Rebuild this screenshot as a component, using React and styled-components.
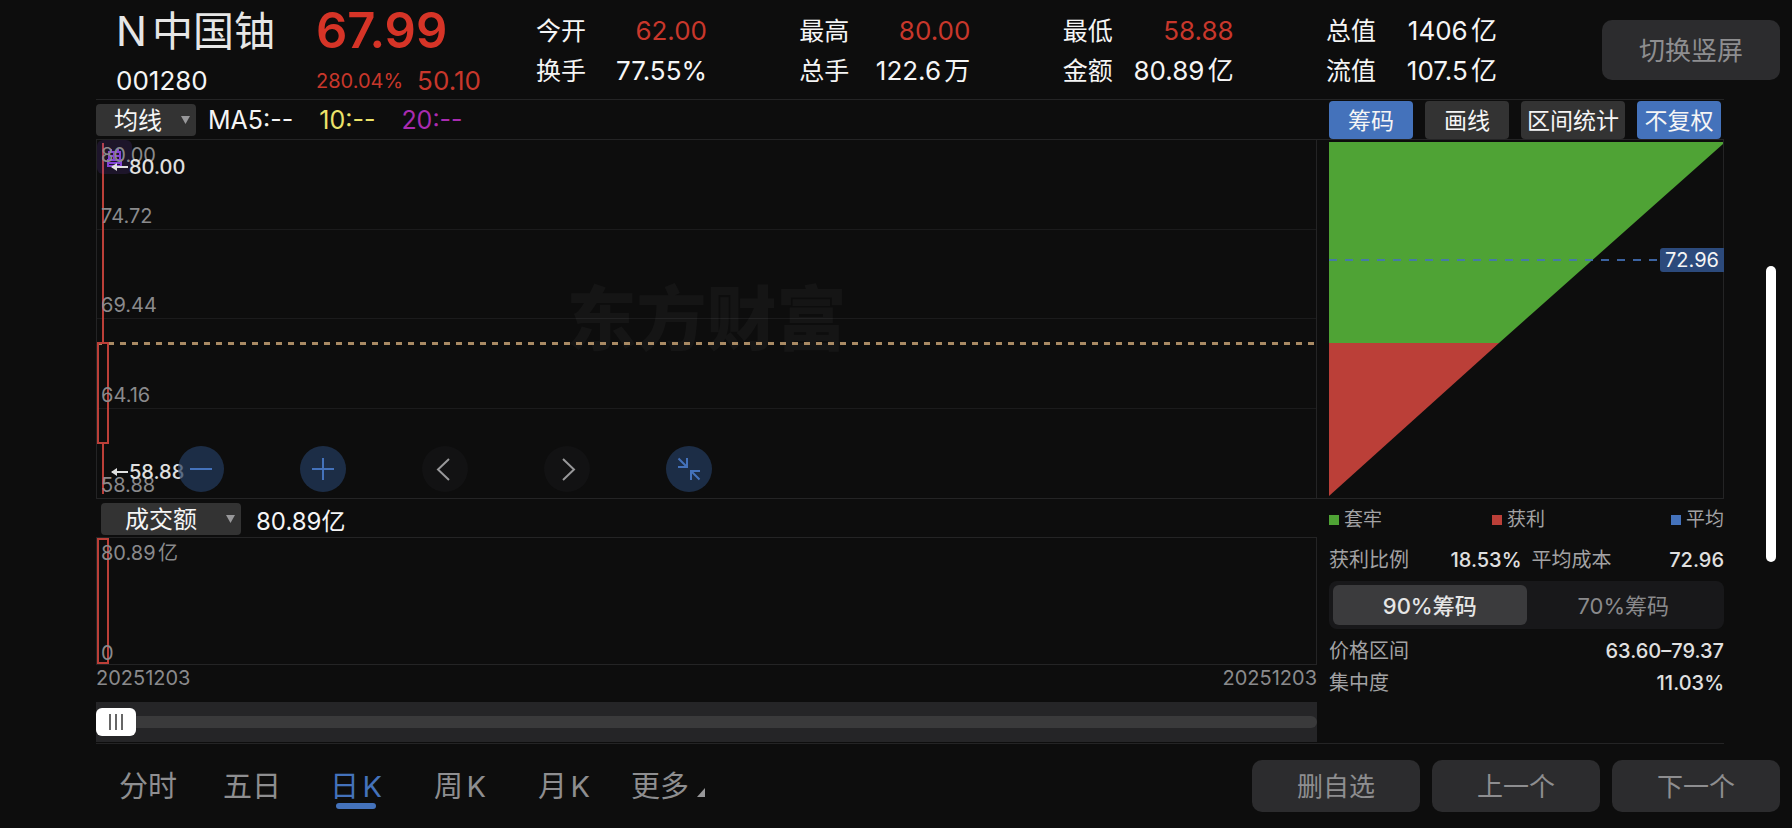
import React, { useState } from 'react';
import styled, { createGlobalStyle } from 'styled-components';

const GlobalStyle = createGlobalStyle`
  *, *::before, *::after {
    box-sizing: border-box;
  }

  body {
    margin: 0;
    background: #0d0d0d;
    color: #f5f5f5;
    font-family: Inter, "Noto Sans CJK SC", sans-serif;
  }

  button, select, input {
    font-family: inherit;
    margin: 0;
  }

  button {
    border: none;
    padding: 0;
    cursor: pointer;
  }
`;

const LINE = '#242425';
const RED = '#bb3f38';
const GREEN = '#4fa335';
const BLUE = '#4472bb';

const Page = styled.div`
  overflow: hidden;
`;

const Header = styled.header`
  display: flex;
  align-items: flex-start;
  height: 99px;
  padding: 0 12px 0 116px;
`;

const Quote = styled.div`
  display: grid;
  grid-template-columns: 200px 1fr;
  grid-template-rows: 62px 37px;
  align-items: center;
  flex: 0 0 420px;
`;

const Name = styled.h1`
  margin: 0;
  font-size: 41px;
  font-weight: 400;
  line-height: 60px;
  color: #e6e6e6;
  white-space: nowrap;
  text-autospace: normal;
`;

const Price = styled.strong`
  font-size: 49px;
  font-weight: 600;
  line-height: 60px;
  color: #d63427;
`;

const Code = styled.span`
  font-size: 26px;
  line-height: 38px;
`;

const Change = styled.div`
  display: flex;
  align-items: center;
  gap: 14px;
  font-size: 26px;
  line-height: 38px;
  color: #c8372b;

  small {
    font-size: 20px;
  }
`;

const Stats = styled.dl`
  display: flex;
  flex: 1;
  justify-content: space-between;
  margin: 0 105px 0 0;
  padding-top: 11px;
`;

const StatColumn = styled.div`
  width: 171px;
`;

const Stat = styled.div`
  display: flex;
  justify-content: space-between;
  line-height: 40px;
  white-space: nowrap;

  dt {
    font-size: 25px;
  }

  dd {
    margin: 0;
    font-size: 26px;
    color: ${ p => p.$up ? '#c8372b' : 'inherit' };
    text-autospace: normal;
  }
`;

const GreyButton = styled.button`
  flex: none;
  width: ${ p => p.$large ? 178 : 168 }px;
  height: ${ p => p.$large ? 60 : 52 }px;
  margin-top: ${ p => p.$large ? 20 : 0 }px;
  padding-bottom: 3px;
  border-radius: 10px;
  background: #2c2c2e;
  color: #8e8e90;
  font-size: 26px;
`;

const Content = styled.main`
  margin: 0 68px 0 96px;
  border-top: 1px solid ${ LINE };
  border-bottom: 1px solid ${ LINE };
`;

const Toolbar = styled.div`
  display: flex;
  align-items: center;
  height: 39px;
`;

const SelectBox = styled.span`
  position: relative;
  display: block;
  width: ${ p => p.$width }px;
  height: 32px;
  margin-left: ${ p => p.$inset || 0 }px;

  select {
    appearance: none;
    width: 100%;
    height: 32px;
    padding: 1px 0 0 ${ p => p.$pad }px;
    border: none;
    border-radius: 4px;
    background: #333;
    color: #f5f5f5;
    font-size: 24px;
    line-height: 31px;
  }

  svg {
    position: absolute;
    right: 6px;
    top: 12px;
    pointer-events: none;
  }
`;

const Average = styled.span`
  margin-left: ${ p => p.$first ? 12 : 26 }px;
  color: ${ p => p.$color };
  font-size: 25px;
`;

const ToolGroup = styled.div`
  display: flex;
  gap: 12px;
  width: 395px;
  margin-left: auto;
`;

const ToolButton = styled.button`
  height: 38px;
  min-width: 84px;
  padding: 0 6px 2px;
  border-radius: 4px;
  background: ${ p => p.$active ? BLUE : '#333' };
  color: #f5f5f5;
  font-size: 23px;
  white-space: nowrap;
`;

const ChartRow = styled.div`
  display: grid;
  grid-template-columns: 1fr 395px;
  column-gap: 12px;
  height: 360px;
  border: 1px solid ${ LINE };
  border-right: none;
`;

const PriceChart = styled.section`
  position: relative;
  display: grid;
  grid-template-rows: repeat(4, 1fr);
  border-right: 1px solid ${ LINE };
`;

const GridBand = styled.div`
  display: flex;
  align-items: flex-end;
  padding-left: 4px;
  border-bottom: ${ p => p.$last ? 'none' : '1px solid #1b1b1c' };
`;

const AxisLabel = styled.span`
  position: relative;
  z-index: 2;
  font-size: 20px;
  line-height: 26px;
  color: #8a8a8c;
  text-autospace: normal;
`;

const TopLabel = styled(AxisLabel)`
  position: absolute;
  left: 4px;
  top: 2px;
`;

const BottomLabel = styled(AxisLabel)`
  position: absolute;
  left: 4px;
  bottom: -2px;
`;

const Watermark = styled.span`
  position: absolute;
  inset: 0;
  display: flex;
  align-items: center;
  justify-content: center;
  padding-bottom: 10px;
  color: rgba(255, 255, 255, .035);
  font-size: 70px;
  font-weight: 900;
`;

const Candle = styled.svg`
  position: absolute;
  left: 0;
  top: 0;
`;

const LastPriceLine = styled.div`
  position: absolute;
  left: 0;
  right: 0;
  top: 202px;
  height: 3px;
  background: repeating-linear-gradient(90deg, #a98a64 0 5px, transparent 5px 11px, #a98a64 11px 12px);
`;

const EventBadge = styled.span`
  position: absolute;
  left: 0;
  top: 0;
  width: 35px;
  height: 34px;
  border-radius: 6px;
  background: rgba(130, 70, 220, .14);

  svg {
    display: block;
    margin: 9px 0 0 10px;
  }
`;

const Extreme = styled.span`
  position: absolute;
  z-index: 2;
  left: 14px;
  top: ${ p => p.$top }px;
  display: flex;
  align-items: center;
  gap: 1px;
  color: #e0e0e0;
  font-size: 20px;
  font-weight: 500;
  line-height: 26px;
`;

const ChartControls = styled.div`
  position: absolute;
  z-index: 3;
  left: 81px;
  bottom: 6px;
  display: flex;
  gap: 76px;
`;

const RoundButton = styled.button`
  width: 46px;
  height: 46px;
  border-radius: 50%;
  background: ${ p => p.$dim ? '#121213' : 'rgba(35, 60, 96, .7)' };
  color: ${ p => p.$dim ? '#98989a' : BLUE };

  svg {
    display: block;
    margin: 0 auto;
  }
`;

const ChipChart = styled.section`
  position: relative;
  padding-top: 2px;
  border-right: 1px solid ${ LINE };

  > svg {
    display: block;
    width: 100%;
    height: 354px;
  }
`;

const AverageCost = styled.div`
  position: absolute;
  left: 0;
  right: -1px;
  top: 108px;
  display: flex;
  align-items: center;
  gap: 3px;

  &::before {
    content: "";
    flex: 1;
    height: 2px;
    background: repeating-linear-gradient(90deg, rgba(68, 114, 187, .85) 0 8px, transparent 8px 16px);
  }

  span {
    width: 64px;
    border-radius: 3px 0 0 3px;
    background: #2c4a7c;
    color: #f5f5f5;
    font-size: 20px;
    line-height: 24px;
    text-align: center;
  }
`;

const LowerRow = styled.div`
  display: grid;
  grid-template-columns: 1fr 395px;
  column-gap: 12px;
`;

const VolumeHead = styled.div`
  display: flex;
  align-items: center;
  gap: 15px;
  height: 38px;
  padding-top: 2px;
  font-size: 24px;
`;

const VolumeChart = styled.section`
  position: relative;
  height: 128px;
  border: 1px solid ${ LINE };

  &::before {
    content: "";
    position: absolute;
    left: 0;
    top: 0;
    bottom: 0;
    width: 12px;
    border: 2px solid ${ RED };
  }
`;

const Dates = styled.div`
  display: flex;
  justify-content: space-between;
  height: 37px;
  color: #8a8a8c;
  font-size: 20px;
  line-height: 26px;
`;

const RangeBox = styled.div`
  height: 40px;
  margin-bottom: 1px;
  background: #252527;

  input {
    display: block;
    appearance: none;
    width: 100%;
    height: 40px;
    background: transparent;
  }

  input::-webkit-slider-runnable-track {
    height: 12px;
    border-radius: 6px;
    background: #3a3a3b;
  }

  input::-webkit-slider-thumb {
    appearance: none;
    width: 40px;
    height: 28px;
    margin-top: -8px;
    border-radius: 6px;
    background:
      linear-gradient(#666, #666) 13px 6px / 2px 16px no-repeat,
      linear-gradient(#666, #666) 19px 6px / 2px 16px no-repeat,
      linear-gradient(#666, #666) 25px 6px / 2px 16px no-repeat,
      #fff;
  }
`;

const Legend = styled.div`
  display: grid;
  grid-template-columns: 163px 1fr auto;
  line-height: 42px;
`;

const LegendItem = styled.span`
  display: flex;
  align-items: center;
  gap: 5px;
  color: #a2a2a4;
  font-size: 19px;

  &::before {
    content: "";
    width: 10px;
    height: 10px;
    background: ${ p => p.$color };
  }
`;

const FactRow = styled.div`
  display: flex;
  gap: 10px;
`;

const Fact = styled.div`
  display: flex;
  flex: 1;
  justify-content: space-between;
  color: #a2a2a4;
  font-size: 20px;
  line-height: ${ p => p.$tall ? 38 : 32 }px;

  b {
    color: #e0e0e0;
    font-weight: 500;
  }
`;

const Segments = styled.div`
  display: flex;
  height: 48px;
  margin: 2px 0 6px;
  padding: 4px;
  border-radius: 8px;
  background: #18181a;
`;

const Segment = styled.button`
  flex: 1;
  padding-bottom: 2px;
  border-radius: 6px;
  background: ${ p => p.$active ? '#3b3b3d' : 'transparent' };
  color: ${ p => p.$active ? '#e6e6e6' : '#8a8a8c' };
  font-size: 22px;
  font-weight: ${ p => p.$active ? 500 : 400 };
`;

const Footer = styled.footer`
  display: flex;
  align-items: center;
  justify-content: space-between;
  height: 84px;
  padding: 0 12px 0 96px;
`;

const Tabs = styled.nav`
  display: flex;
`;

const Tab = styled.button`
  position: relative;
  width: 104px;
  padding-top: 2px;
  background: none;
  color: ${ p => p.$active ? BLUE : '#8e8e90' };
  font-size: 29px;
  line-height: 44px;
  white-space: nowrap;
  text-autospace: normal;

  &::after {
    content: "";
    display: ${ p => p.$active ? 'block' : 'none' };
    position: absolute;
    left: 32px;
    bottom: 0;
    width: 40px;
    height: 6px;
    border-radius: 3px;
    background: ${ BLUE };
  }

  svg {
    margin-left: 8px;
  }
`;

const Actions = styled.div`
  display: flex;
  gap: 12px;
`;

const ScrollThumb = styled.div`
  position: fixed;
  right: 16px;
  top: 266px;
  width: 10px;
  height: 296px;
  border-radius: 5px;
  background: #fff;
`;

const STATS = [
  [{ label: '今开', value: '62.00', up: true }, { label: '换手', value: '77.55%' }],
  [{ label: '最高', value: '80.00', up: true }, { label: '总手', value: '122.6万' }],
  [{ label: '最低', value: '58.88', up: true }, { label: '金额', value: '80.89亿' }],
  [{ label: '总值', value: '1406亿' }, { label: '流值', value: '107.5亿' }],
];

const TOOLS = [
  { name: '筹码', active: true },
  { name: '画线' },
  { name: '区间统计' },
  { name: '不复权', active: true },
];

const PRICES = ['74.72', '69.44', '64.16', '58.88'];
const PERIODS = ['分时', '五日', '日K', '周K', '月K', '更多'];

const Dropdown = ({ label, option, ...rest }) => (
  <SelectBox { ...rest }>
    <select aria-label={ label }><option>{ option }</option></select>
    <svg width="9" height="8"><path d="M0 0h9L4.5 8z" fill="#98989a" /></svg>
  </SelectBox>
);

const Arrow = () => (
  <svg width="17" height="10" fill="none" stroke="currentColor" strokeWidth="2">
    <path d="M1 5h16" />
    <path d="M6 1L0 5l6 4z" fill="currentColor" stroke="none" />
  </svg>
);

const Icon = ({ d, width = 2 }) => (
  <svg width="24" height="24" fill="none" stroke="currentColor" strokeWidth={ width }>
    <path d={ d } />
  </svg>
);

const Chips = () => (
  <svg viewBox="0 0 394 354" preserveAspectRatio="none">
    <path d="M0 0H394V2L170 201H0z" fill={ GREEN } />
    <path d="M0 201H170L0 354z" fill={ RED } />
  </svg>
);

export default () => {
  const [period, setPeriod] = useState('日K');
  const [chip, setChip] = useState('90%');

  return <Page>
    <GlobalStyle />
    <Header>
      <Quote>
        <Name>N中国铀</Name>
        <Price>67.99</Price>
        <Code>001280</Code>
        <Change><small>280.04%</small> 50.10</Change>
      </Quote>
      <Stats>
        { STATS.map(column => (
          <StatColumn key={ column[0].label }>
            { column.map(({ label, value, up }) => (
              <Stat key={ label } $up={ up }><dt>{ label }</dt><dd>{ value }</dd></Stat>
            )) }
          </StatColumn>
        )) }
      </Stats>
      <GreyButton $large>切换竖屏</GreyButton>
    </Header>

    <Content>
      <Toolbar>
        <Dropdown label="均线" option="均线" $width={ 100 } $pad={ 18 } />
        <Average $first $color="#f5f5f5">MA5:--</Average>
        <Average $color="#ece36a">10:--</Average>
        <Average $color="#a92bb0">20:--</Average>
        <ToolGroup>
          { TOOLS.map(({ name, active }) => <ToolButton key={ name } $active={ active }>{ name }</ToolButton>) }
        </ToolGroup>
      </Toolbar>

      <ChartRow>
        <PriceChart>
          <Watermark>东方财富</Watermark>
          { PRICES.map((price, i) => (
            <GridBand key={ price } $last={ i === PRICES.length - 1 }><AxisLabel>{ price }</AxisLabel></GridBand>
          )) }
          <TopLabel>80.00</TopLabel>
          <LastPriceLine />
          <Candle width="12" height="358" fill="none" stroke={ RED } strokeWidth="2">
            <path d="M6 3V202M6 304V354" />
            <rect x="1" y="203" width="10" height="100" />
          </Candle>
          <EventBadge>
            <svg width="15" height="18" fill="none" stroke="#8444d6" strokeWidth="2">
              <path d="M4 0v4M11 0v4M2 3h11v8H2zM2 7h11M7 3v8M1 14h13M1 10v7h13v-7" />
            </svg>
          </EventBadge>
          <Extreme $top={ 14 }><Arrow />80.00</Extreme>
          <Extreme $top={ 319 }><Arrow />58.88</Extreme>
          <ChartControls>
            <RoundButton aria-label="缩小"><Icon d="M1 12h22" /></RoundButton>
            <RoundButton aria-label="放大"><Icon d="M1 12h22M12 1v22" /></RoundButton>
            <RoundButton aria-label="向左" $dim><Icon d="M16 2L5 12.500L16 23" /></RoundButton>
            <RoundButton aria-label="向右" $dim><Icon d="M8 2L19 12.500L8 23" /></RoundButton>
            <RoundButton aria-label="收起"><Icon d="M1.500 1.500L10 10M1 10h9.500M10 1v10M22.500 22.500L14 14M23 14h-9.500M14 23v-10" /></RoundButton>
          </ChartControls>
        </PriceChart>
        <ChipChart>
          <Chips />
          <AverageCost><span>72.96</span></AverageCost>
        </ChipChart>
      </ChartRow>

      <LowerRow>
        <div>
          <VolumeHead>
            <Dropdown label="成交额" option="成交额" $width={ 140 } $pad={ 24 } $inset={ 5 } />
            80.89亿
          </VolumeHead>
          <VolumeChart>
            <TopLabel>80.89亿</TopLabel>
            <BottomLabel>0</BottomLabel>
          </VolumeChart>
          <Dates><span>20251203</span><span>20251203</span></Dates>
          <RangeBox><input type="range" aria-label="日期范围" defaultValue="0" /></RangeBox>
        </div>
        <div>
          <Legend>
            <LegendItem $color={ GREEN }>套牢</LegendItem>
            <LegendItem $color={ RED }>获利</LegendItem>
            <LegendItem $color={ BLUE }>平均</LegendItem>
          </Legend>
          <FactRow>
            <Fact $tall>获利比例<b>18.53%</b></Fact>
            <Fact $tall>平均成本<b>72.96</b></Fact>
          </FactRow>
          <Segments>
            { ['90%', '70%'].map(share => (
              <Segment key={ share } $active={ share === chip } onClick={ () => setChip(share) }>{ share }筹码</Segment>
            )) }
          </Segments>
          <Fact>价格区间<b>63.60–79.37</b></Fact>
          <Fact>集中度<b>11.03%</b></Fact>
        </div>
      </LowerRow>
    </Content>

    <Footer>
      <Tabs>
        { PERIODS.map(name => (
          <Tab key={ name } $active={ name === period } onClick={ () => setPeriod(name) }>
            { name }
            { name === '更多' && <svg width="8" height="9"><path d="M8 0v9H0z" fill="#98989a" /></svg> }
          </Tab>
        )) }
      </Tabs>
      <Actions>
        <GreyButton>删自选</GreyButton>
        <GreyButton>上一个</GreyButton>
        <GreyButton>下一个</GreyButton>
      </Actions>
    </Footer>
    <ScrollThumb />
  </Page>
}
